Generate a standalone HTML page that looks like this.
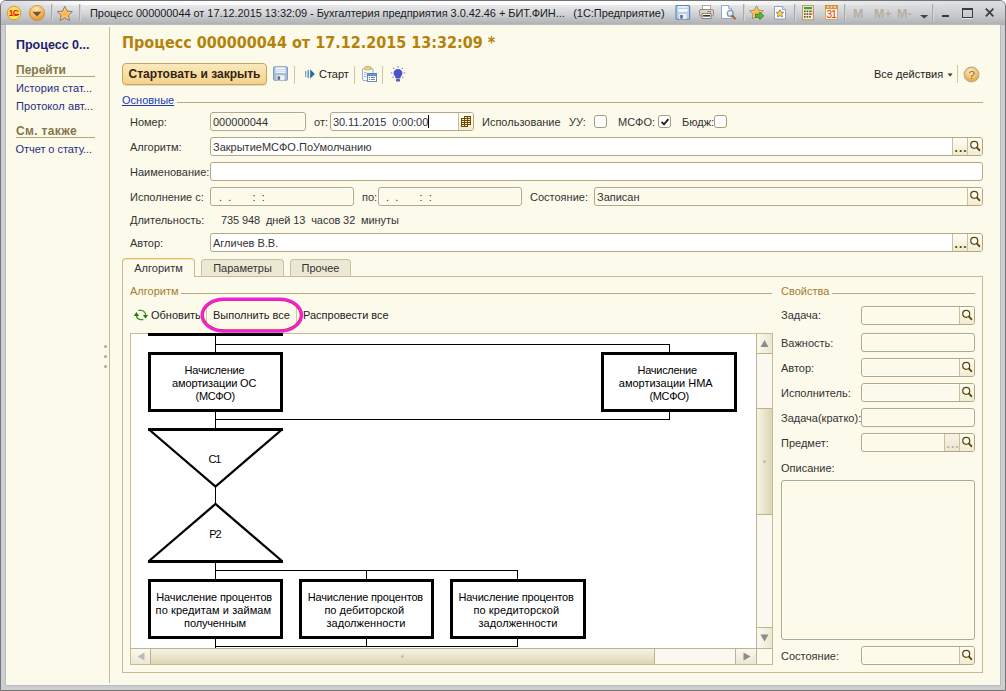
<!DOCTYPE html>
<html lang="ru"><head><meta charset="utf-8"><title>Процесс 000000044</title>
<style>
*{box-sizing:border-box;margin:0;padding:0}
html,body{width:1006px;height:691px;overflow:hidden;background:#fff}
body{position:relative;font-family:"Liberation Sans",Arial,sans-serif;font-size:11px;color:#333}
.a{position:absolute;white-space:pre}
#frame{left:0;top:0;width:1006px;height:691px;background:#cdced2;border-radius:6px 6px 0 0;border:1px solid #747474}
#titlebar{left:1px;top:1px;width:1004px;height:24px;border-radius:5px 5px 0 0;background:linear-gradient(#dcdde0 0%,#d6d7da 25%,#c6c7cb 65%,#b4b5b9 92%,#aaabb0 100%)}
#tbhi{left:6px;top:1px;width:994px;height:4px;background:linear-gradient(90deg,rgba(255,255,255,0) 0,rgba(255,255,255,.95) 8%,#fff 68%,rgba(255,255,255,.35) 86%,rgba(255,255,255,0) 99%)}
#tbhi2{left:6px;top:5px;width:994px;height:14px;background:linear-gradient(rgba(255,255,255,.42),rgba(255,255,255,0));-webkit-mask-image:linear-gradient(90deg,transparent 0,#000 8%,#000 68%,transparent 97%);mask-image:linear-gradient(90deg,transparent 0,#000 8%,#000 68%,transparent 97%)}
#client{left:6px;top:25px;width:994px;height:660px;background:#fcfaeb;box-shadow:0 0 0 1px #b9babe}
.t{height:21px;line-height:21px}
.fld{height:19px;border:1px solid #b4a87e;border-radius:3px;background:#fff;line-height:19px;padding-left:2px;overflow:hidden}
.ro{background:#fcfaeb;box-shadow:inset 0 0 0 1px #fff}
.btn{position:absolute;width:15px;height:17px;border-left:1px solid #c9bf9c;background:linear-gradient(#fffef6,#f1ebd3);top:0}
.grp{color:#a87c2c}
.hl{height:1px;background:#b5aa84}
.vs{width:1px;background:#cfc6a4}
.cb{width:13px;height:13px;border:1px solid #a59c78;border-radius:3px;background:#fff}
.sbl{color:#1f2c84;letter-spacing:0.08px}
.sbh{color:#85764c;font-weight:bold;font-size:12px}
svg{position:absolute;overflow:visible}
</style></head><body>
<div id="frame" class="a"></div>
<div id="titlebar" class="a"></div><div id="tbhi" class="a"></div><div id="tbhi2" class="a"></div>
<div id="client" class="a"></div>
<!-- TITLEBAR -->
<svg class="a" style="left:0;top:0" width="1006" height="26" viewBox="0 0 1006 26">
 <defs>
  <radialGradient id="g1c" cx="0.4" cy="0.3" r="0.8"><stop offset="0" stop-color="#ffdf70"/><stop offset="0.500" stop-color="#ffe030"/><stop offset="1" stop-color="#fff060"/></radialGradient>
  <radialGradient id="gor" cx="0.45" cy="0.25" r="0.8"><stop offset="0" stop-color="#ffe9b0"/><stop offset="0.55" stop-color="#f6b85a"/><stop offset="1" stop-color="#d88a2a"/></radialGradient>
  <radialGradient id="gstar" cx="0.5" cy="0.55" r="0.55"><stop offset="0" stop-color="#ffae3a"/><stop offset="0.55" stop-color="#ffc968"/><stop offset="1" stop-color="#ffe9a8"/></radialGradient>
 </defs>
 <!-- 1C logo -->
 <circle cx="14" cy="13" r="6.800" fill="url(#g1c)" stroke="#c99250" stroke-width="0.900"/>
 <text x="8.700" y="15.800" font-family="Liberation Sans" font-weight="bold" font-size="8.500" fill="#e8201a" letter-spacing="-0.700">1С</text>
 <rect x="14.500" y="13.900" width="4.700" height="1.300" fill="#e8201a"/>
 <!-- dropdown circle -->
 <circle cx="37" cy="13" r="7.6" fill="url(#gor)" stroke="#c98a3a" stroke-width="0.8"/>
 <path d="M32.400 11.800h9.200l-4.600 4.800z" fill="#6b5640"/>
 <rect x="51" y="4" width="1" height="17" fill="#a9aaae"/><rect x="52" y="4" width="1" height="17" fill="#d3d4d8"/>
 <!-- star -->
 <path d="M64.800 6.300l2.300 4.800 5.200 .600-3.900 3.600 1.100 5.200-4.700-2.600-4.700 2.600 1.100-5.200-3.900-3.600 5.200-.600z" fill="url(#gstar)" stroke="#77736c" stroke-width="0.900" stroke-linejoin="round"/>
 <rect x="79" y="4" width="1" height="17" fill="#a9aaae"/><rect x="80" y="4" width="1" height="17" fill="#d3d4d8"/>

 <!-- save -->
 <g transform="translate(675.500,5) scale(1.050)">
  <rect x="0.5" y="0.5" width="13" height="13" rx="1" fill="#b9d0ea" stroke="#5580b0"/>
  <rect x="2.5" y="1" width="9" height="5.5" fill="#f4f8fd"/>
  <rect x="2.5" y="2.6" width="9" height="1" fill="#a9c3e4"/>
  <rect x="3.5" y="8.5" width="7" height="5" fill="#e9eef6"/>
  <rect x="4.5" y="9.5" width="2.4" height="3.5" fill="#566a8a"/>
 </g>
 <!-- printer -->
 <g transform="translate(699,5)">
  <rect x="3.5" y="0.5" width="8" height="5" fill="#fff" stroke="#9a9a9a" stroke-width="0.8"/>
  <rect x="0.5" y="4.5" width="14" height="6.5" rx="1.5" fill="#dcd3c6" stroke="#8f8577" stroke-width="0.9"/>
  <rect x="3" y="8.5" width="9" height="5" fill="#fff" stroke="#6a6a6a" stroke-width="0.8"/>
  <rect x="4" y="10" width="7" height="1.6" fill="#333"/>
  <rect x="10.5" y="6" width="1.4" height="1.2" fill="#e03020"/><rect x="8.5" y="6" width="1.4" height="1.2" fill="#38a038"/>
 </g>
 <!-- preview -->
 <g transform="translate(721,5)">
  <path d="M0.5 0.5h7l3 3v10h-10z" fill="#fff" stroke="#8aa2c4" stroke-width="0.9"/>
  <path d="M7.5 0.5v3h3" fill="#dfe8f4" stroke="#8aa2c4" stroke-width="0.8"/>
  <circle cx="9.2" cy="8.4" r="3" fill="#dbe9fa" stroke="#7f8fa8" stroke-width="1.1"/>
  <path d="M11.4 10.8l2.6 2.8" stroke="#a0622a" stroke-width="2" stroke-linecap="round"/>
 </g>
 <rect x="743" y="4" width="1" height="17" fill="#a9aaae"/><rect x="744" y="4" width="1" height="17" fill="#d3d4d8"/>
 <!-- star with arrow -->
 <g transform="translate(749,5)">
  <path d="M7.5 0.8l2.1 4.4 4.8 .6-3.5 3.3 .9 4.8-4.3-2.4-4.3 2.4 .9-4.8-3.5-3.3 4.8-.6z" fill="url(#gstar)" stroke="#9a8a60" stroke-width="0.9" stroke-linejoin="round"/>
  <path d="M6.5 9.2h4.2v-2l4.3 3.6-4.3 3.6v-2h-4.2z" fill="#58b83a" stroke="#2f7a22" stroke-width="0.8" stroke-linejoin="round"/>
 </g>
 <!-- star doc -->
 <g transform="translate(774,6)">
  <path d="M0.5 0.5h8l3 3v9.5h-11z" fill="#fff" stroke="#7f9ac0" stroke-width="0.9"/>
  <path d="M8.5 0.5v3h3" fill="#dfe8f4" stroke="#7f9ac0" stroke-width="0.8"/>
  <path d="M5.9 3.6l1.2 2.5 2.7 .3-2 1.9 .5 2.7-2.4-1.3-2.4 1.3 .5-2.7-2-1.9 2.7-.3z" fill="#ffd050" stroke="#8a7a55" stroke-width="0.8" stroke-linejoin="round"/>
 </g>
 <rect x="794" y="4" width="1" height="17" fill="#a9aaae"/><rect x="795" y="4" width="1" height="17" fill="#d3d4d8"/>
 <!-- calculator -->
 <g transform="translate(802,5) scale(1,1.1)">
  <rect x="0.5" y="0.5" width="11" height="13" fill="#f7ecc8" stroke="#b09a60" stroke-width="0.9"/>
  <rect x="2" y="1.8" width="8" height="2" fill="#3aa040"/>
  <g fill="#5a5040"><rect x="2" y="5" width="1.6" height="1.5"/><rect x="4.6" y="5" width="1.6" height="1.5"/><rect x="7.2" y="5" width="1.6" height="1.5"/>
  <rect x="2" y="7.5" width="1.6" height="1.5"/><rect x="4.6" y="7.5" width="1.6" height="1.5"/><rect x="7.2" y="7.5" width="1.6" height="1.5"/>
  <rect x="2" y="10" width="1.6" height="1.5"/><rect x="4.6" y="10" width="1.6" height="1.5"/><rect x="7.2" y="10" width="1.6" height="1.5"/></g>
  <rect x="9.3" y="5" width="1" height="1.5" fill="#e03020"/><rect x="9.3" y="7.5" width="1" height="1.5" fill="#e03020"/>
 </g>
 <!-- calendar -->
 <g transform="translate(825,5)">
  <rect x="0.5" y="0.5" width="12" height="14" fill="#fdf6e0" stroke="#c9a860" stroke-width="0.9"/>
  <rect x="0.5" y="0.5" width="12" height="3" fill="#e8a040" stroke="#c98a30" stroke-width="0.8"/>
  <rect x="2.4" y="1.3" width="1.2" height="1.2" fill="#fff"/><rect x="5.9" y="1.3" width="1.2" height="1.2" fill="#fff"/><rect x="9.4" y="1.3" width="1.2" height="1.2" fill="#fff"/>
  <text x="1.4" y="12.6" font-family="Liberation Sans" font-size="10" fill="#e03020" letter-spacing="-0.8">31</text>
 </g>
 <rect x="844" y="4" width="1" height="17" fill="#a9aaae"/><rect x="845" y="4" width="1" height="17" fill="#d3d4d8"/>
 <g font-family="Liberation Sans" font-weight="bold" font-size="12.5" fill="#b9aea2">
  <text x="853" y="18">M</text><text x="874" y="18">M+</text><text x="897" y="18">M-</text>
 </g>
 <path d="M920 15h8.4l-4.2 3.6z" fill="#444"/>
 <rect x="932" y="4" width="1" height="17" fill="#a9aaae"/><rect x="933" y="4" width="1" height="17" fill="#d3d4d8"/>
 <rect x="942" y="15" width="7" height="2" fill="#3a3a3a"/>
 <rect x="962.500" y="8.500" width="10" height="9" fill="none" stroke="#3c3c3c" stroke-width="1"/><rect x="962" y="8" width="11" height="2" fill="#3c3c3c"/><rect x="962" y="18" width="11" height="1" fill="#e4e4e6"/>
 <path d="M985.800 8.700l7.600 7.600M993.400 8.700l-7.600 7.600" stroke="#404040" stroke-width="1.900"/>
</svg>
<div class="a" style="left:90px;top:6px;height:14px;line-height:14px;color:#1a1a1a;letter-spacing:-0.060px">Процесс 000000044 от 17.12.2015 13:32:09 - Бухгалтерия предприятия 3.0.42.46 + БИТ.ФИН...  <span style="margin-left:2.500px">(1С:Предприятие)</span></div>
<!-- SIDEBAR -->
<div class="a" style="left:109px;top:27px;width:1px;height:656px;background:#c5ba92"></div>
<div class="a" style="left:16px;top:37px;height:16px;line-height:16px;font-weight:bold;font-size:12.5px;color:#1c2172">Процесс 0...</div>
<div class="a sbh" style="left:16px;top:63px;height:15px;line-height:15px">Перейти</div>
<div class="a hl" style="left:16px;top:76px;width:79px;background:#b3a67a"></div>
<div class="a sbl t" style="left:16px;top:78px">История стат...</div>
<div class="a sbl t" style="left:16px;top:96px">Протокол авт...</div>
<div class="a sbh" style="left:16px;top:124px;height:15px;line-height:15px;letter-spacing:0.350px">См. также</div>
<div class="a hl" style="left:16px;top:137px;width:79px;background:#b3a67a"></div>
<div class="a sbl t" style="left:15.500px;top:139px;letter-spacing:-0.050px">Отчет о стату...</div>
<!-- splitter dots -->
<div class="a" style="left:103.500px;top:344.500px;width:3px;height:3px;border-radius:50%;background:#b3ab8e"></div>
<div class="a" style="left:103.500px;top:354.500px;width:3px;height:3px;border-radius:50%;background:#b3ab8e"></div>
<div class="a" style="left:103.500px;top:364.500px;width:3px;height:3px;border-radius:50%;background:#b3ab8e"></div>
<!-- MAIN HEADER -->
<div class="a" style="left:122px;top:31px;height:24px;line-height:24px;font-family:'DejaVu Sans Condensed','DejaVu Sans','Liberation Sans',sans-serif;font-weight:bold;font-size:16px;color:#b4820a;letter-spacing:0px">Процесс 000000044 от 17.12.2015 13:32:09 *</div>
<div class="a" style="left:122px;top:63px;width:145px;height:22px;border:1px solid #c9a45c;border-radius:4px;background:linear-gradient(#fbe9bd,#f3d28c);box-shadow:0 1px 0 #e9dcb8;text-align:center;line-height:20px;font-weight:bold;font-size:12px;color:#33250f">Стартовать и закрыть</div>
<svg class="a" style="left:272px;top:66px" width="150" height="18" viewBox="0 0 150 18">
 <!-- save -->
 <g transform="translate(1,0.3)">
  <rect x="0.5" y="0.5" width="14" height="13.5" rx="1" fill="#a9bdd8" stroke="#7f98bc"/>
  <rect x="2.5" y="1" width="10" height="5.6" fill="#f4f8fd"/>
  <rect x="2.5" y="2.6" width="10" height="0.9" fill="#c4d4ea"/><rect x="2.5" y="4.4" width="10" height="0.9" fill="#c4d4ea"/>
  <rect x="3.5" y="9" width="8" height="5" fill="#eef1f6"/>
  <rect x="4.5" y="10" width="2.6" height="3.5" fill="#5e6e86"/>
 </g>
 <rect x="22" y="0" width="1" height="18" fill="#cfc6a4"/>
 <!-- start icon -->
 <rect x="33" y="5" width="1.3" height="6" fill="#7aa6cc"/><rect x="35.5" y="4" width="1.3" height="8" fill="#4a86b8"/>
 <path d="M38.2 3.2l4.6 4.8-4.6 4.8z" fill="#2a6aa0"/>
 <rect x="82" y="0" width="1" height="18" fill="#cfc6a4"/>
 <!-- clipboard -->
 <g transform="translate(90,0)">
  <rect x="0.5" y="2.5" width="10.5" height="12" rx="1.2" fill="#f3f6fb" stroke="#8da2c2" stroke-width="0.9"/>
  <rect x="2.8" y="0.6" width="6" height="3.2" rx="1" fill="#f0d678" stroke="#c2a24a" stroke-width="0.8"/>
  <rect x="2" y="6" width="3" height="0.9" fill="#a9bbd6"/><rect x="2" y="8" width="2.4" height="0.9" fill="#a9bbd6"/><rect x="2" y="10" width="2.4" height="0.9" fill="#a9bbd6"/>
  <rect x="5.5" y="7.5" width="9" height="8" fill="#fff" stroke="#5f7fae" stroke-width="0.9"/>
  <rect x="5.5" y="7.5" width="9" height="2.2" fill="#6f95cf" stroke="#5f7fae" stroke-width="0.9"/>
  <rect x="7" y="11" width="1.2" height="1" fill="#6f86aa"/><rect x="9" y="11" width="4" height="1" fill="#6f86aa"/>
  <rect x="7" y="13" width="1.2" height="1" fill="#6f86aa"/><rect x="9" y="13" width="4" height="1" fill="#6f86aa"/>
 </g>
 <rect x="110" y="0" width="1" height="18" fill="#cfc6a4"/>
 <!-- bulb -->
 <g transform="translate(119.5,0)">
  <path d="M6.5 3c2.5 0 4.4 1.9 4.400 4.200 0 1.500-.8 2.400-1.500 3.300-.4.600-.6 1.300-.6 2h-4.600c0-.7-.2-1.400-.6-2-.7-.9-1.500-1.800-1.500-3.300 0-2.300 1.900-4.200 4.400-4.200z" fill="#4a52cc"/>
  <rect x="4.5" y="13" width="4" height="2.600" rx="0.9" fill="#5a5cae"/>
  <g fill="#6a78e0"><rect x="6" y="0" width="1" height="1.600"/><rect x="1.600" y="1.800" width="1.200" height="1.200"/><rect x="10.200" y="1.800" width="1.200" height="1.200"/><rect x="-0.800" y="6.400" width="1.600" height="1"/><rect x="12.200" y="6.400" width="1.600" height="1"/><rect x="1" y="10.600" width="1.200" height="1.200"/><rect x="10.800" y="10.600" width="1.200" height="1.200"/></g>
 </g>
</svg>
<div class="a t" style="left:319px;top:64px;color:#222">Старт</div>
<div class="a t" style="left:874px;top:64px;color:#222">Все действия</div>
<svg class="a" style="left:944px;top:64px" width="40" height="22" viewBox="0 0 40 22">
 <defs><radialGradient id="ghelp" cx="0.45" cy="0.3" r="0.8"><stop offset="0" stop-color="#ffedc0"/><stop offset="0.6" stop-color="#f2bc5e"/><stop offset="1" stop-color="#d9963a"/></radialGradient></defs>
 <path d="M3.600 9.500h5l-2.500 3z" fill="#333"/>
 <rect x="13" y="1" width="1" height="18" fill="#cfc6a4"/>
 <circle cx="27.500" cy="10.500" r="7.400" fill="url(#ghelp)" stroke="#bcae8c" stroke-width="1.100"/>
 <text x="24.600" y="14.600" font-family="Liberation Sans" font-size="11.500" fill="#806a48">?</text>
</svg>

<!-- group Основные -->
<div class="a" style="left:122px;top:93px;height:15px;line-height:15px;color:#2038b8;text-decoration:underline">Основные</div>
<div class="a hl" style="left:177px;top:102px;width:806px"></div>

<!-- row 1 -->
<div class="a t" style="left:130px;top:112px">Номер:</div>
<div class="a fld ro" style="left:210px;top:112px;width:96px">000000044</div>
<div class="a t" style="left:314px;top:112px">от:</div>
<div class="a fld" style="left:330px;top:112px;width:144px;letter-spacing:-0.1px">30.11.2015  0:00:00<span style="display:inline-block;width:1px;height:13px;background:#000;vertical-align:-2px"></span><div class="btn" style="right:0"><svg style="left:2px;top:3px" width="11" height="11" viewBox="0 0 11 11" shape-rendering="crispEdges"><g fill="#6a4a00"><rect x="0" y="2" width="10" height="7"/><rect x="3" y="0" width="7" height="3"/><rect x="0" y="8" width="7" height="3"/></g><g fill="#f8f0cf"><rect x="4" y="1" width="2" height="1"/><rect x="7" y="1" width="2" height="1"/><rect x="1" y="3" width="2" height="1"/><rect x="4" y="3" width="2" height="1"/><rect x="7" y="3" width="2" height="1"/><rect x="1" y="5" width="2" height="1"/><rect x="4" y="5" width="2" height="1"/><rect x="7" y="5" width="2" height="1"/><rect x="1" y="7" width="2" height="1"/><rect x="4" y="7" width="2" height="1"/><rect x="7" y="7" width="2" height="1"/><rect x="1" y="9" width="2" height="1"/><rect x="4" y="9" width="2" height="1"/></g></svg></div></div>
<div class="a t" style="left:482px;top:112px">Использование</div>
<div class="a t" style="left:569px;top:112px">УУ:</div>
<div class="a cb" style="left:594px;top:115px"></div>
<div class="a t" style="left:618px;top:112px">МСФО:</div>
<div class="a cb" style="left:658px;top:115px"><svg style="left:1px;top:1px" width="10" height="10" viewBox="0 0 10 10"><path d="M1.6 4.8l2.4 2.6 4.4-5.2" fill="none" stroke="#222" stroke-width="1.9"/></svg></div>
<div class="a t" style="left:682px;top:112px">Бюдж:</div>
<div class="a cb" style="left:714px;top:115px"></div>

<!-- row 2 -->
<div class="a t" style="left:130px;top:137px">Алгоритм:</div>
<div class="a fld" style="left:210px;top:137px;width:773px">ЗакрытиеМСФО.ПоУмолчанию<div class="btn" style="right:15px"><span style="position:absolute;left:1.500px;top:1px;font-weight:bold;font-size:12px;color:#5a4204;letter-spacing:1.100px">...</span></div><div class="btn" style="right:0"><svg style="left:2px;top:2px" width="12" height="13" viewBox="0 0 12 13"><circle cx="4.200" cy="4.800" r="3.500" fill="#fffdf2" stroke="#5e4708" stroke-width="1.200"/><path d="M7 7.700l2.300 2.500" stroke="#5e4708" stroke-width="1.900" stroke-linecap="round"/></svg></div></div>

<!-- row 3 -->
<div class="a t" style="left:130px;top:162px">Наименование:</div>
<div class="a fld" style="left:210px;top:162px;width:773px"></div>

<!-- row 4 -->
<div class="a t" style="left:130px;top:187px">Исполнение с:</div>
<div class="a fld ro" style="left:210px;top:187px;width:144px;padding-left:8px">.  .       :  :</div>
<div class="a t" style="left:362px;top:187px">по:</div>
<div class="a fld ro" style="left:378px;top:187px;width:144px;padding-left:7px">.  .       :  :</div>
<div class="a t" style="left:530px;top:187px">Состояние:</div>
<div class="a fld ro" style="left:594px;top:187px;width:389px">Записан<div class="btn" style="right:0"><svg style="left:2px;top:2px" width="12" height="13" viewBox="0 0 12 13"><circle cx="4.200" cy="4.800" r="3.500" fill="#fffdf2" stroke="#5e4708" stroke-width="1.200"/><path d="M7 7.700l2.300 2.500" stroke="#5e4708" stroke-width="1.900" stroke-linecap="round"/></svg></div></div>

<!-- row 5 -->
<div class="a t" style="left:130px;top:210px">Длительность:</div>
<div class="a t" style="left:221px;top:210px;letter-spacing:-0.1px">735 948  дней 13  часов 32  минуты</div>

<!-- row 6 -->
<div class="a t" style="left:130px;top:233px">Автор:</div>
<div class="a fld" style="left:210px;top:233px;width:773px">Агличев В.В.<div class="btn" style="right:15px"><span style="position:absolute;left:1.500px;top:1px;font-weight:bold;font-size:12px;color:#5a4204;letter-spacing:1.100px">...</span></div><div class="btn" style="right:0"><svg style="left:2px;top:2px" width="12" height="13" viewBox="0 0 12 13"><circle cx="4.200" cy="4.800" r="3.500" fill="#fffdf2" stroke="#5e4708" stroke-width="1.200"/><path d="M7 7.700l2.300 2.500" stroke="#5e4708" stroke-width="1.900" stroke-linecap="round"/></svg></div></div>
<!-- TABS -->
<div class="a" style="left:122px;top:276px;width:861px;height:397px;border:1px solid #c5ba92;background:#fcfaeb"></div>
<div class="a" style="left:201px;top:259px;width:83px;height:17px;border:1px solid #c9c0a0;border-bottom:none;border-radius:4px 4px 0 0;background:#ece8d4;text-align:center;line-height:17px">Параметры</div>
<div class="a" style="left:290px;top:259px;width:61px;height:17px;border:1px solid #c9c0a0;border-bottom:none;border-radius:4px 4px 0 0;background:#ece8d4;text-align:center;line-height:17px">Прочее</div>
<div class="a" style="left:122px;top:258px;width:73px;height:19px;border:1px solid #c5ba92;border-top:1px solid #e8bd68;border-bottom:none;border-radius:4px 4px 0 0;background:#fcfaeb;box-shadow:inset 0 1px 0 #f6e3b8;text-align:center;line-height:18px">Алгоритм</div>

<div class="a grp t" style="left:130px;top:281px">Алгоритм</div>
<div class="a hl" style="left:181px;top:293px;width:591px"></div>
<div class="a grp t" style="left:781px;top:281px">Свойства</div>
<div class="a hl" style="left:832px;top:293px;width:143px"></div>

<!-- toolbar -->
<svg class="a" style="left:130px;top:304px" width="24" height="22" viewBox="0 0 24 22">
 <path d="M8.300 6.400h2.600a4.700 4.700 0 0 1 4.700 4.900" fill="none" stroke="#35961c" stroke-width="1.300"/>
 <path d="M12.900 11h5.200l-2.600 3.500z" fill="#1f7a10"/>
 <path d="M13.400 15.600h-2.300a4.700 4.700 0 0 1-4.700-4.200" fill="none" stroke="#35961c" stroke-width="1.300"/>
 <path d="M3.800 11.900h5.200l-2.600-3.800z" fill="#1f7a10"/>
</svg>
<div class="a t" style="left:151px;top:305px;color:#222">Обновить</div>
<div class="a vs" style="left:206px;top:306px;height:19px"></div>
<div class="a t" style="left:213px;top:305px;color:#222">Выполнить все</div>
<div class="a vs" style="left:296px;top:306px;height:19px"></div>
<div class="a t" style="left:303px;top:305px;color:#222">Распровести все</div>
<svg class="a" style="left:196px;top:294px" width="112" height="42" viewBox="0 0 112 42">
 <rect x="7.300" y="6.400" width="97" height="29.400" rx="21" ry="14.700" fill="none" stroke="#e0204c" stroke-width="1.200"/>
 <rect x="5.900" y="5" width="99.800" height="32.400" rx="22" ry="16.200" fill="none" stroke="#ee22d6" stroke-width="2.800"/>
</svg>
<!-- DIAGRAM -->
<div class="a" style="left:130px;top:333px;width:643px;height:332px;border:1px solid #c5ba92;background:#fff"></div>
<svg class="a" style="left:131px;top:334px" width="626" height="314" viewBox="131 334 626 314" font-family="Liberation Sans" font-size="11" fill="#000" text-anchor="start">
 <g stroke="#000" stroke-width="1" fill="none" shape-rendering="crispEdges">
  <path d="M215.5 334v20M215.5 344.5h454v8M215.5 410v20M215.5 419.5h454v-8M215.5 487v17M215.5 561v20M215.5 570.5h302v10M366.5 570.5v10M215.5 637v11M215.5 646.5h302v-9M366.5 637v10"/>
 </g>
 <g stroke="#000" stroke-width="3" fill="#fff" shape-rendering="crispEdges">
  <path d="M148 334.5h135"/>
  <rect x="149.500" y="353.500" width="132" height="57"/>
  <rect x="602.500" y="353.500" width="133" height="57"/>
  <rect x="149.500" y="580.500" width="132" height="57"/>
  <rect x="300.500" y="580.500" width="132" height="57"/>
  <rect x="451.500" y="580.500" width="133" height="57"/>
 </g>
 <g stroke="#000" stroke-width="3" fill="none" shape-rendering="crispEdges">
  <path d="M148 429.500h135M148 561h135"/>
 </g>
 <g stroke="#000" stroke-width="2.300" fill="none" stroke-linejoin="miter">
  <path d="M149 429.500l66.500 57 66.500-57"/>
  <path d="M149 561l66.500-57 66.500 57"/>
 </g>
 <text x="184.5" y="374" textLength="60.1" lengthAdjust="spacing">Начисление</text>
 <text x="172.0" y="387" textLength="84.5" lengthAdjust="spacing">амортизации ОС</text>
 <text x="195.6" y="399.5" textLength="39.6" lengthAdjust="spacing">(МСФО)</text>
 <text x="637.6" y="374" textLength="59.5" lengthAdjust="spacing">Начисление</text>
 <text x="618.8" y="387" textLength="93.9" lengthAdjust="spacing">амортизации НМА</text>
 <text x="649.4" y="399.5" textLength="39.7" lengthAdjust="spacing">(МСФО)</text>
 <text x="208.6" y="463" textLength="12.8" lengthAdjust="spacing">C1</text>
 <text x="209.2" y="537.5" textLength="12.3" lengthAdjust="spacing">P2</text>
 <text x="156.3" y="601" textLength="115.9" lengthAdjust="spacing">Начисление процентов</text>
 <text x="155.6" y="614" textLength="115.5" lengthAdjust="spacing">по кредитам и займам</text>
 <text x="184.1" y="627" textLength="61.9" lengthAdjust="spacing">полученным</text>
 <text x="307.7" y="601" textLength="115.5" lengthAdjust="spacing">Начисление процентов</text>
 <text x="324.4" y="614" textLength="79.7" lengthAdjust="spacing">по дебиторской</text>
 <text x="326.4" y="627" textLength="78.9" lengthAdjust="spacing">задолженности</text>
 <text x="458.6" y="601" textLength="115.3" lengthAdjust="spacing">Начисление процентов</text>
 <text x="473.4" y="614" textLength="85.8" lengthAdjust="spacing">по кредиторской</text>
 <text x="478.5" y="627" textLength="78.9" lengthAdjust="spacing">задолженности</text>
</svg>
<!-- scrollbars -->
<div class="a" style="left:756px;top:334px;width:16px;height:314px;background:#faf8f0;border-left:1px solid #bdb38e"></div>
<div class="a" style="left:756px;top:334px;width:16px;height:20px;background:linear-gradient(90deg,#fbf9ef,#ece7d1);border-left:1px solid #bdb38e;border-bottom:1px solid #bdb38e"></div>
<div class="a" style="left:756px;top:408px;width:16px;height:107px;background:linear-gradient(90deg,#f7f4e4,#dcd5b5);border:1px solid #bdb38e;border-right:none"></div>
<div class="a" style="left:756px;top:627px;width:16px;height:21px;background:linear-gradient(90deg,#fbf9ef,#ece7d1);border-left:1px solid #bdb38e;border-top:1px solid #bdb38e"></div>
<div class="a" style="left:131px;top:648px;width:641px;height:16px;background:#faf8f0;border-top:1px solid #bdb38e"></div>
<div class="a" style="left:131px;top:648px;width:20px;height:16px;background:linear-gradient(#fbf9ef,#ece7d1);border-top:1px solid #bdb38e;border-right:1px solid #bdb38e"></div>
<div class="a" style="left:151px;top:648px;width:504px;height:16px;background:linear-gradient(#f7f4e4,#dcd5b5);border:1px solid #bdb38e;border-bottom:none;border-left:none"></div>
<div class="a" style="left:735px;top:648px;width:22px;height:16px;background:linear-gradient(#fbf9ef,#ece7d1);border-top:1px solid #bdb38e;border-left:1px solid #bdb38e"></div>
<div class="a" style="left:756px;top:648px;width:16px;height:16px;background:#fcfaeb;border-top:1px solid #bdb38e;border-left:1px solid #bdb38e"></div>
<svg class="a" style="left:131px;top:334px" width="641" height="330" viewBox="131 334 641 330">
 <path d="M760.500 347h8l-4-7z" fill="#8d8d8d"/>
 <path d="M760.500 634.500h8l-4 7z" fill="#8d8d8d"/>
 <path d="M144.500 652.500v8l-7-4z" fill="#b9b9b9"/>
 <path d="M743.500 652.500v8l7-4z" fill="#8d8d8d"/>
 <circle cx="764.500" cy="461.500" r="1.300" fill="#b9b4a0"/>
 <circle cx="402.500" cy="656.500" r="1.300" fill="#b9b4a0"/>
</svg>
<!-- PROPERTIES -->
<div class="a t" style="left:781px;top:305px">Задача:</div>
<div class="a fld ro" style="left:861px;top:306px;width:114px"><div class="btn" style="right:0"><svg style="left:2px;top:2px" width="12" height="13" viewBox="0 0 12 13"><circle cx="4.200" cy="4.800" r="3.500" fill="#fffdf2" stroke="#5e4708" stroke-width="1.200"/><path d="M7 7.700l2.300 2.500" stroke="#5e4708" stroke-width="1.900" stroke-linecap="round"/></svg></div></div>
<div class="a t" style="left:781px;top:333px">Важность:</div>
<div class="a fld ro" style="left:861px;top:333px;width:114px"></div>
<div class="a t" style="left:781px;top:358px">Автор:</div>
<div class="a fld ro" style="left:861px;top:358px;width:114px"><div class="btn" style="right:0"><svg style="left:2px;top:2px" width="12" height="13" viewBox="0 0 12 13"><circle cx="4.200" cy="4.800" r="3.500" fill="#fffdf2" stroke="#5e4708" stroke-width="1.200"/><path d="M7 7.700l2.300 2.500" stroke="#5e4708" stroke-width="1.900" stroke-linecap="round"/></svg></div></div>
<div class="a t" style="left:781px;top:383px">Исполнитель:</div>
<div class="a fld ro" style="left:861px;top:383px;width:114px"><div class="btn" style="right:0"><svg style="left:2px;top:2px" width="12" height="13" viewBox="0 0 12 13"><circle cx="4.200" cy="4.800" r="3.500" fill="#fffdf2" stroke="#5e4708" stroke-width="1.200"/><path d="M7 7.700l2.300 2.500" stroke="#5e4708" stroke-width="1.900" stroke-linecap="round"/></svg></div></div>
<div class="a t" style="left:781px;top:408px">Задача(кратко):</div>
<div class="a fld ro" style="left:861px;top:408px;width:114px"></div>
<div class="a t" style="left:781px;top:433px">Предмет:</div>
<div class="a fld ro" style="left:861px;top:433px;width:114px"><div class="btn" style="right:15px;background:linear-gradient(#f6f3e4,#ece7d2)"><span style="position:absolute;left:1.500px;top:1px;font-weight:bold;font-size:12px;color:#b5b2a6;letter-spacing:1.100px">...</span></div><div class="btn" style="right:0"><svg style="left:2px;top:2px" width="12" height="13" viewBox="0 0 12 13"><circle cx="4.200" cy="4.800" r="3.500" fill="#fffdf2" stroke="#5e4708" stroke-width="1.200"/><path d="M7 7.700l2.300 2.500" stroke="#5e4708" stroke-width="1.900" stroke-linecap="round"/></svg></div></div>
<div class="a t" style="left:781px;top:458px">Описание:</div>
<div class="a fld ro" style="left:781px;top:480px;width:194px;height:160px"></div>
<div class="a t" style="left:781px;top:646px">Состояние:</div>
<div class="a fld ro" style="left:861px;top:646px;width:114px"><div class="btn" style="right:0"><svg style="left:2px;top:2px" width="12" height="13" viewBox="0 0 12 13"><circle cx="4.200" cy="4.800" r="3.500" fill="#fffdf2" stroke="#5e4708" stroke-width="1.200"/><path d="M7 7.700l2.300 2.500" stroke="#5e4708" stroke-width="1.900" stroke-linecap="round"/></svg></div></div>
</body></html>
